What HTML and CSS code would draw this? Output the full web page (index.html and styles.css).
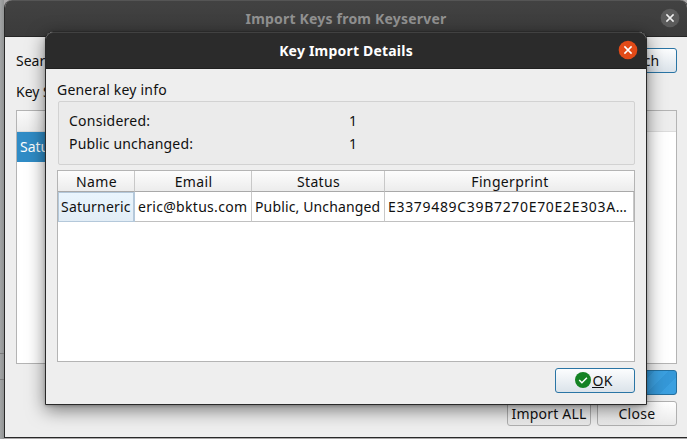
FILE: index.html
```html
<!DOCTYPE html>
<html lang="en">
<head>
<meta charset="utf-8">
<title>Key Import Details</title>
<link rel="stylesheet" href="styles.css">
</head>
<body>
<div class="desktop">
  <div class="backdrop"></div>
  <section class="window">
    <header class="titlebar titlebar-inactive">
      <h1 class="title">Import Keys from Keyserver</h1>
      <svg class="close close-window" viewBox="0 0 20 20"><circle cx="10" cy="10" r="9.3" fill="#5b5b5b"/><path d="M6.4 6.4l7.2 7.2M13.6 6.4l-7.2 7.2" stroke="#efefef" stroke-width="1.5"/></svg>
    </header>
    <div class="window-body">
      <div class="search-row"><span>Sear</span><button class="button button-blue">Search</button></div>
      <div class="server-row">Key S</div>
      <div class="key-list">
        <div class="list-head"></div>
        <div class="list-selected">Satu</div>
      </div>
      <div class="progress"></div>
      <div class="actions">
        <button class="button button-import"><span class="t-import">Import ALL</span></button>
        <button class="button"><span class="t-close">Close</span></button>
      </div>
    </div>
  </section>
</div>
<section class="dialog">
  <header class="titlebar titlebar-active">
    <h2 class="title">Key Import Details</h2>
    <svg class="close close-dialog" viewBox="0 0 20 20"><circle cx="10" cy="10" r="9.3" fill="#e24a17"/><path d="M6.4 6.4l7.2 7.2M13.6 6.4l-7.2 7.2" stroke="#fff" stroke-width="1.5"/></svg>
  </header>
  <div class="dialog-body">
    <div class="group-label"><span class="t-general">General key info</span></div>
    <div class="group">
      <span><span class="t-considered">Considered:</span></span><span>1</span>
      <span><span class="t-unchanged">Public unchanged:</span></span><span>1</span>
    </div>
    <div class="table">
      <div class="row head">
        <div><span>Name</span></div><div><span>Email</span></div><div><span>Status</span></div><div><span>Fingerprint</span></div>
      </div>
      <div class="row data">
        <div class="current"><span class="t-user">Saturneric</span></div><div><span class="t-mail">eric@bktus.com</span></div><div><span class="t-public">Public, Unchanged</span></div><div><span class="t-hash">E3379489C39B7270E70E2E303A…</span></div>
      </div>
    </div>
    <div class="dialog-actions">
      <button class="button button-blue button-ok"><svg class="check" viewBox="0 0 16 16"><circle cx="8" cy="8" r="8" fill="#148324"/><path d="M4.2 8l2.7 2.7 5-5" fill="none" stroke="#fff" stroke-width="1.5"/></svg><span class="t-ok"><span class="mnemonic">O</span>K</span></button>
    </div>
  </div>
</section>
</body>
</html>
```
FILE: styles.css
```css
* { box-sizing: border-box; }
body {
  margin: 0;
  width: 687px;
  height: 439px;
  overflow: hidden;
  position: relative;
  font: 14px/20px "Noto Sans", "Open Sans", sans-serif;
  color: #101010;
  white-space: nowrap;
}
.desktop { display: flex; width: 690px; height: 439px; background: #aaa8a9; overflow: hidden; }
.backdrop {
  width: 4px;
  background:
    linear-gradient(#7b7b7b, #7b7b7b) 0 353px / 4px 1px no-repeat,
    linear-gradient(#7b7b7b, #7b7b7b) 0 379px / 4px 1px no-repeat,
    linear-gradient(90deg, #a3a5a6, #919393);
}
.window {
  flex: none;
  width: 684px;
  height: 438px;
  border: 1px solid #292929;
  border-top: 0;
  border-radius: 8px 8px 0 0;
  background: #eee;
  overflow: hidden;
}
.titlebar { display: grid; grid-template-columns: 1fr; align-items: center; height: 37px; position: relative; }
.titlebar-inactive { background: linear-gradient(#424242, #3b3b3b); border-top: 1px solid #555; border-bottom: 1px solid #262626; }
.title { margin: 0; font-size: 14px; line-height: 20px; font-weight: 700; text-align: center; letter-spacing: .2px; }
.titlebar-inactive .title { color: #929292; }
.close { position: absolute; width: 20px; height: 20px; }
.close-window { right: 7px; top: 7px; }
.window-body { padding: 11px 10px 0 11px; }
.search-row { display: flex; justify-content: space-between; align-items: flex-start; height: 26px; }
.search-row > span { padding-top: 3px; }
.server-row { height: 36px; padding-top: 8px; }
.key-list { height: 254px; border: 1px solid #b4b4b4; background: #fff; }
.list-head { height: 21px; background: linear-gradient(90deg, transparent 50%, #ededed 50%), linear-gradient(#fafafa, #ededed); border-bottom: 1px solid #dcdcdc; }
.list-selected { width: 200px; height: 30px; padding: 5px 3px; color: #fff; background: #308cc6; }
.button {
  display: flex;
  align-items: center;
  justify-content: center;
  width: 80px;
  height: 25px;
  padding: 0;
  border: 1px solid #b0b0b0;
  border-radius: 3px;
  background: linear-gradient(#fff, #e9e9e9);
  color: #101010;
  font: inherit;
}
.button-blue { border-color: #2a75a5; background: linear-gradient(#fcfdfe, #dbe3ea); }
.button-import { width: 84px; }
.progress {
  width: 80px;
  height: 25px;
  margin: 6px 0 0 auto;
  border: 1px solid #246f9e;
  border-radius: 3px;
  background: repeating-linear-gradient(135deg, #3ba0e0 0 10px, #3598d8 10px 20px);
}
.actions { display: flex; justify-content: flex-end; gap: 6px; margin-top: 6px; }
.dialog {
  position: absolute;
  left: 45px;
  top: 31px;
  width: 602px;
  height: 374px;
  border: 1px solid #292929;
  border-radius: 8px 8px 0 0;
  background: #eee;
  box-shadow: 0 5px 18px rgba(0, 0, 0, .5), 0 1px 3px rgba(0, 0, 0, .2);
}
.titlebar-active { border-radius: 7px 7px 0 0; border-top: 1px solid #414141; border-bottom: 1px solid #202020; background: #2b2b2b; }
.titlebar-active .title { color: #fff; }
.close-dialog { right: 8px; top: 7px; }
.dialog-body { padding: 11px 11px 0; }
.group-label { height: 21px; }
.group {
  display: grid;
  grid-template-columns: 280px 1fr;
  grid-auto-rows: 23px;
  height: 64px;
  margin-left: 1px;
  padding: 9px 10px;
  border: 1px solid #d2d2d2;
  border-radius: 2px;
  background: #ebebeb;
}
.table { height: 192px; margin-top: 5px; border: 1px solid #b4b4b4; background: #fff; }
.row { display: grid; grid-template-columns: 77px 117px 133px 1fr; }
.row > div { display: flex; align-items: center; justify-content: center; border-right: 1px solid #c8c8c8; border-bottom: 1px solid #c0c0c0; }
.head { height: 21px; background: linear-gradient(#fdfdfd, #ebebeb); letter-spacing: .35px; line-height: 18px; }
.head > div { border-bottom-color: #a9a9a9; padding: 2px 0 0 1px; }
.head > div:last-child { border-right: 0; }
.data { width: 576px; height: 30px; }
.data > div { justify-content: flex-start; padding-left: 3px; }
.data > .current { border: 1px solid #b4c8da; border-right-width: 2px; background: linear-gradient(#eaf5fd, #e2edf6); padding-left: 2px; }
.dialog-actions { display: flex; justify-content: flex-end; margin-top: 6px; }
.check { width: 16px; height: 16px; margin-top: -2px; }
.t-ok { margin-left: 1px; letter-spacing: .3px; }
.mnemonic { display: inline-block; height: 17px; line-height: 20px; border-bottom: 1px solid #101010; }
.button-ok { line-height: 18px; padding-right: 2px; }
.t-general, .t-user { letter-spacing: .2px; }
.t-considered { letter-spacing: .25px; }
.t-unchanged { letter-spacing: .16px; }
.t-mail { letter-spacing: .3px; }
.t-public { letter-spacing: .14px; }
.t-hash { letter-spacing: .68px; }
.t-import { letter-spacing: .2px; }
.t-close { letter-spacing: .3px; }
```
